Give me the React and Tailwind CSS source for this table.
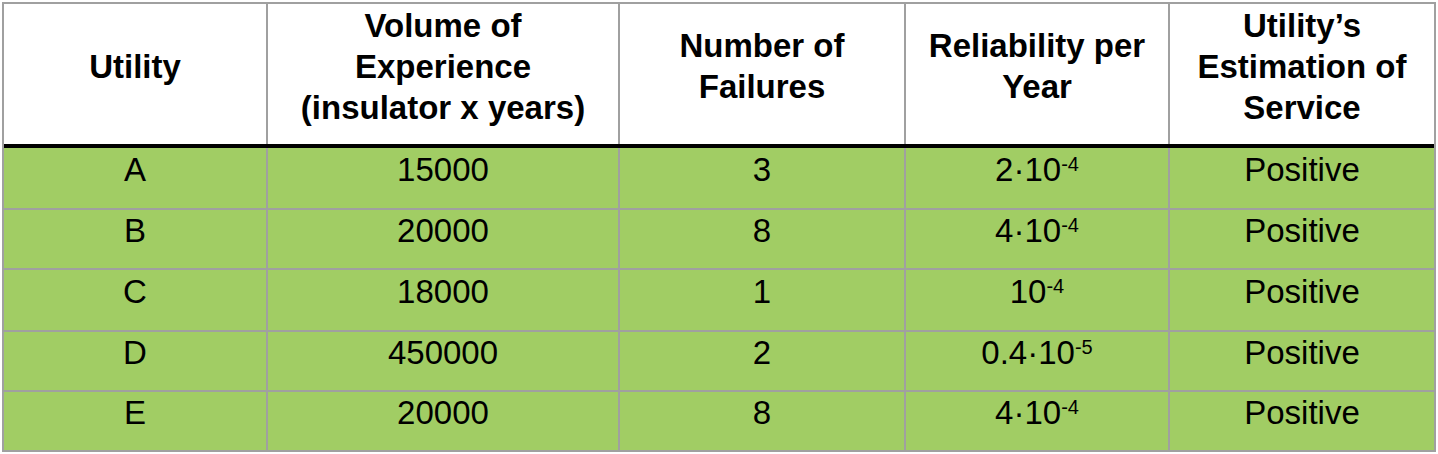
const COLS = ['w-[264px]', 'w-[352px]', 'w-[286px]', 'w-[264px]', 'w-[264px]']

const HEADERS = [
  ['Utility'],
  ['Volume of', 'Experience', '(insulator x years)'],
  ['Number of', 'Failures'],
  ['Reliability per', 'Year'],
  ['Utility’s', 'Estimation of', 'Service'],
]

const ROWS = [
  { h: 'h-[62px]', cells: ['A', '15000', '3', ['2·10', '-4'], 'Positive'] },
  { h: 'h-[60px]', cells: ['B', '20000', '8', ['4·10', '-4'], 'Positive'] },
  { h: 'h-[62px]', cells: ['C', '18000', '1', ['10', '-4'], 'Positive'] },
  { h: 'h-[60px]', cells: ['D', '450000', '2', ['0.4·10', '-5'], 'Positive'] },
  { h: 'h-[58px]', cells: ['E', '20000', '8', ['4·10', '-4'], 'Positive'] },
]

function Value({ v }) {
  if (Array.isArray(v)) {
    return (
      <span>
        {v[0]}
        <sup className="text-[20px]">{v[1]}</sup>
      </span>
    )
  }
  return <span>{v}</span>
}

export default function App() {
  return (
    <div className="bg-white w-[1438px] h-[454px] pt-[2px] pl-[2px]" style={{ fontFamily: '"Liberation Sans", Arial, sans-serif' }}>
      <div className="w-[1434px] border-2 border-[#a0a0a0] text-black">
        <div className="flex h-[144px] border-b-4 border-black bg-white">
          {HEADERS.map((lines, i) => (
            <div
              key={i}
              className={`${COLS[i]} ${i < 4 ? 'border-r-2 border-[#a0a0a0]' : ''} flex flex-col items-center justify-center pb-4 text-[33px] leading-[41px] font-bold text-center`}
            >
              {lines.map((l) => (
                <div key={l}>{l}</div>
              ))}
            </div>
          ))}
        </div>
        {ROWS.map((row, r) => (
          <div
            key={r}
            className={`flex ${row.h} bg-[#a1cd64] ${r < ROWS.length - 1 ? 'border-b-2 border-[#a0a0a0]' : ''}`}
          >
            {row.cells.map((c, i) => (
              <div
                key={i}
                className={`${COLS[i]} ${i < 4 ? 'border-r-2 border-[#a0a0a0]' : ''} flex items-center justify-center pb-4 text-[33px] leading-[38px]`}
              >
                <Value v={c} />
              </div>
            ))}
          </div>
        ))}
      </div>
    </div>
  )
}
